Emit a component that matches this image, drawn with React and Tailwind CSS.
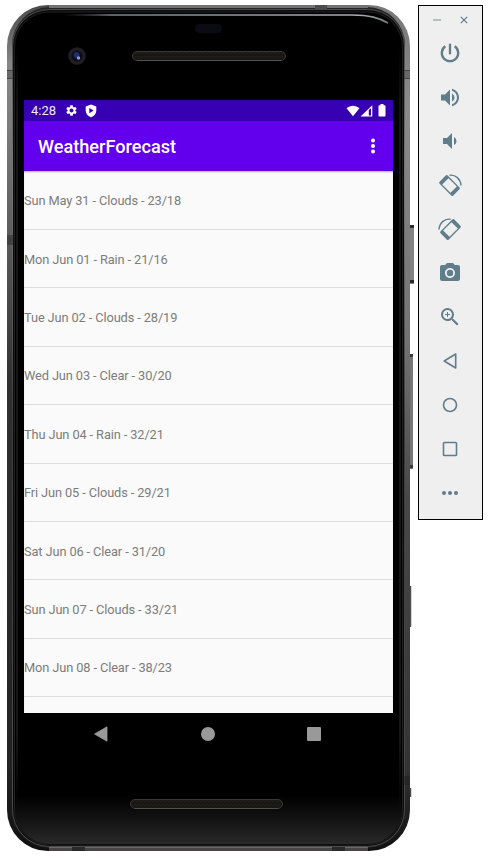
import React from "react";
import {
  MdVolumeUp,
  MdVolumeDown,
  MdCameraAlt,
  MdZoomIn,
  MdSettings,
} from "react-icons/md";

const forecast = [
  "Sun May 31 - Clouds - 23/18",
  "Mon Jun 01 - Rain - 21/16",
  "Tue Jun 02 - Clouds - 28/19",
  "Wed Jun 03 - Clear - 30/20",
  "Thu Jun 04 - Rain - 32/21",
  "Fri Jun 05 - Clouds - 29/21",
  "Sat Jun 06 - Clear - 31/20",
  "Sun Jun 07 - Clouds - 33/21",
  "Mon Jun 08 - Clear - 38/23",
];

function RotateIcon({ flip }) {
  return (
    <svg width="24" height="24" viewBox="0 0 24 24" className={flip ? "-scale-x-100" : ""}>
      <g transform="rotate(45 11.500 12.500)">
        <path
          fillRule="evenodd"
          fill="currentColor"
          d="M3.300 6.700h16.400a1.500 1.500 0 0 1 1.500 1.500v8.600a1.500 1.500 0 0 1-1.500 1.500H3.300a1.500 1.500 0 0 1-1.500-1.500V8.200a1.500 1.500 0 0 1 1.500-1.500zM5.600 8v9h11.800V8z"
        />
      </g>
      <path d="M11.500 2.200C17.500 1.400 22.600 6 23 12.500" fill="none" stroke="currentColor" strokeWidth="1.400" />
    </svg>
  );
}

function Outline({ children }) {
  return (
    <svg width="24" height="24" viewBox="0 0 24 24" fill="none" stroke="currentColor" strokeWidth="1.600" strokeLinejoin="round">
      {children}
    </svg>
  );
}

const tools = [
  <svg width="24" height="24" viewBox="0 0 24 24" fill="none" stroke="currentColor" strokeWidth="2.300">
    <path d="M12 2.800v10.400M7.300 5.300a8.200 8.200 0 1 0 9.400 0" />
  </svg>,
  <MdVolumeUp size={25} />,
  <MdVolumeDown size={24} />,
  <RotateIcon />,
  <RotateIcon flip />,
  <MdCameraAlt size={24} />,
  <MdZoomIn size={24} />,
  <Outline><path d="M17.700 5v14L6.200 12z" /></Outline>,
  <Outline><circle cx="12" cy="12" r="6.500" /></Outline>,
  <Outline><rect x="5.500" y="5.500" width="13" height="13" rx="0.800" /></Outline>,
  <svg width="24" height="24" viewBox="0 0 24 24" fill="currentColor">
    <circle cx="6" cy="12" r="2" /><circle cx="12" cy="12" r="2" /><circle cx="18" cy="12" r="2" />
  </svg>,
];

function Toolbar() {
  return (
    <aside className="ml-2 flex h-[515px] w-[65px] flex-col items-center border border-black bg-[#efefef] pt-2 text-[#607d8b]">
      <div className="flex h-3 w-full items-center justify-center gap-[19px]">
        <svg width="8" height="8" viewBox="0 0 8 8" stroke="#9db0b9" strokeWidth="1.500"><path d="M0 4h8" /></svg>
        <svg width="8" height="8" viewBox="0 0 8 8" stroke="currentColor" strokeWidth="1.200"><path d="M.8.8l6.400 6.400M7.200.8L.8 7.200" /></svg>
      </div>
      <div className="flex flex-col gap-5 pt-[15px] pr-px">
        {tools.map((icon, i) => (
          <div key={i} className="flex h-6 w-6 items-center justify-center">{icon}</div>
        ))}
      </div>
    </aside>
  );
}

function Grille({ width }) {
  return (
    <svg width={width} height="10" className="block">
      <defs>
        <pattern id="mesh" width="4" height="4" patternUnits="userSpaceOnUse">
          <rect width="4" height="4" fill="#15130f" />
          <path d="M1 0v3M3 1v3" stroke="#25231e" strokeWidth="1" />
        </pattern>
      </defs>
      <rect x=".5" y=".5" width={width - 1} height="9" rx="4.500" fill="url(#mesh)" stroke="#3a3835" />
      <path d={`M5 9.500H${width - 5}`} stroke="#54514c" />
    </svg>
  );
}

function StatusBar() {
  return (
    <div className="flex h-[21px] items-center bg-[#3700b3] pl-[7px] text-white">
      <span className="w-[34px] pt-px text-[13px] leading-5 text-[#f1ecfb]">4:28</span>
      <MdSettings size={13} />
      <svg width="12" height="14" viewBox="0 0 12 14" className="ml-[7px]">
        <path fillRule="evenodd" fill="currentColor" d="M6 .6l5.300 2v4.200c0 3-2.200 5.300-5.300 6.500C2.900 12.100.7 9.800.7 6.800V2.600zM4.300 4v5.200L8.700 6.600z" />
      </svg>
      <svg width="14" height="12" viewBox="0 0 14 12" className="ml-auto">
        <path fill="currentColor" d="M.5 3.200C4.300-.2 9.700-.2 13.500 3.200L7 11.300z" />
      </svg>
      <svg width="13" height="12" viewBox="0 0 13 12">
        <path fillRule="evenodd" fill="currentColor" d="M.5 11.500L12.300.2v11.300zM8.800 5v5.500h2.200V3.200z" />
      </svg>
      <svg width="8" height="13" viewBox="0 0 8 13" className="mr-[7px] ml-[5px]">
        <path fill="currentColor" d="M2.500 0h3v1.300h1.300c.4 0 .7.300.7.700v9.800c0 .4-.3.700-.7.700H1.200c-.4 0-.7-.3-.7-.7V2c0-.4.300-.7.700-.7h1.300z" />
      </svg>
    </div>
  );
}

function AppBar() {
  return (
    <header className="flex h-[50px] items-center justify-between bg-[#6200ee] pr-[17px] pl-[14px] text-white">
      <h1 className="pt-[2px] text-[18.150px] leading-none font-medium">WeatherForecast</h1>
      <svg width="6" height="16" viewBox="0 0 6 16" fill="currentColor">
        <circle cx="3" cy="2.500" r="2" /><circle cx="3" cy="8" r="2" /><circle cx="3" cy="13.500" r="2" />
      </svg>
    </header>
  );
}

function NavBar() {
  return (
    <nav className="flex h-[42px] items-center justify-between pr-[72px] pl-[70px] text-[#999]">
      <svg width="14" height="16" viewBox="0 0 14 16"><path fill="currentColor" d="M13 .8v14.400L.5 8z" stroke="currentColor" strokeLinejoin="round" strokeWidth=".8" /></svg>
      <div className="h-[14px] w-[14px] rounded-full bg-[#999]" />
      <div className="h-[14px] w-[14px] rounded-[1px] bg-[#999]" />
    </nav>
  );
}

/* Metal body, side keys and glass highlights of the handset. */
function DeviceBody() {
  return (
    <svg width="408" height="847" viewBox="0 0 408 847" className="absolute inset-0">
      <defs>
        <linearGradient id="leftRim" x1="0" x2="0" y1="0" y2="1">
          <stop offset="0" stopColor="#4c4c4c" />
          <stop offset=".07" stopColor="#868686" />
          <stop offset=".14" stopColor="#7c7c7c" />
          <stop offset=".27" stopColor="#5c5c5c" />
          <stop offset=".45" stopColor="#303030" />
          <stop offset=".9" stopColor="#232323" />
          <stop offset="1" stopColor="#101010" />
        </linearGradient>
        <linearGradient id="rightRim" x1="0" x2="0" y1="0" y2="1">
          <stop offset="0" stopColor="#777" />
          <stop offset=".12" stopColor="#8a8a8a" />
          <stop offset=".4" stopColor="#727272" />
          <stop offset=".58" stopColor="#484848" />
          <stop offset=".9" stopColor="#343434" />
          <stop offset="1" stopColor="#101010" />
        </linearGradient>
        <linearGradient id="innerLine" x1="0" x2="0" y1="0" y2="1">
          <stop offset="0" stopColor="#4a4a4a" />
          <stop offset=".2" stopColor="#777" />
          <stop offset=".5" stopColor="#3c3c3c" />
          <stop offset="1" stopColor="#4a4a4a" />
        </linearGradient>
        <linearGradient id="stripe" x1="0" x2="0" y1="0" y2="1">
          <stop offset="0" stopColor="#161616" stopOpacity="0" />
          <stop offset=".1" stopColor="#161616" />
          <stop offset=".9" stopColor="#161616" />
          <stop offset="1" stopColor="#161616" stopOpacity="0" />
        </linearGradient>
        <linearGradient id="chin" gradientUnits="userSpaceOnUse" x1="0" x2="0" y1="790" y2="840">
          <stop offset="0" stopColor="#242424" stopOpacity="0" />
          <stop offset="1" stopColor="#2a2a2a" />
        </linearGradient>
        <linearGradient id="shine" gradientUnits="userSpaceOnUse" x1="55" x2="383" y1="0" y2="0">
          <stop offset="0" stopColor="#444" stopOpacity="0" />
          <stop offset=".15" stopColor="#77848a" />
          <stop offset=".9" stopColor="#a7b1b3" />
          <stop offset="1" stopColor="#777" />
        </linearGradient>
        <clipPath id="shell"><rect width="403" height="846" rx="41" /></clipPath>
      </defs>

      <rect x="402" y="220" width="5" height="59" fill="#838383" />
      <path d="M402 221.500h5M402 276.500h5" stroke="#2b2b2b" strokeWidth="3" />
      <rect x="402" y="349" width="4" height="115" fill="#777" />
      <path d="M402 350.500h4M402 461.500h4" stroke="#3a3a3a" strokeWidth="3" />
      <path d="M403.500 581v41M403.500 783v9" stroke="#505050" strokeWidth="1.500" />

      <g clipPath="url(#shell)">
        <rect width="202" height="846" fill="url(#leftRim)" />
        <rect x="202" width="201" height="846" fill="url(#rightRim)" />
        <rect x="5" y="2" width="393" height="841" rx="38" fill="#252525" />
        <rect x="5.500" y="4.500" width="392" height="837" rx="37" fill="#0c0c0c" stroke="url(#innerLine)" />
        <rect x="7.500" y="7" width="388" height="833" rx="35" fill="#000" stroke="#202020" />
        <rect x="9" y="40" width="2" height="765" fill="url(#stripe)" />
        <rect x="392" y="40" width="2" height="765" fill="url(#stripe)" />
        <rect x="8" y="740" width="387" height="99" rx="34" fill="url(#chin)" />
        <path d="M42 1.500H361" stroke="#737373" strokeWidth="3" />
        <path d="M42 842.500H361" stroke="#6a6a6a" />
        <path d="M42 844.500H361" stroke="#464444" strokeWidth="3" />
        <path d="M0 65h6v9H0zM397 65h6v9h-6z" fill="#444" fillOpacity=".45" />
        <path d="M0 230h6v10H0zM397 771h6v9h-6z" fill="#1c1c1c" fillOpacity=".4" />
        <path d="M0 65.500h6M0 73.500h6M397 65.500h6M397 73.500h6M0 230.500h6M0 239.500h6" stroke="#444" />
        <path d="M308 0h12v4h-12z" fill="#4c4c4c" />
        <path d="M65 842h13v4H65zM325 842h13v4h-13z" fill="#2a2a2a" />
      </g>
      <path d="M55 10H345c18 0 27 3 36 8" fill="none" stroke="url(#shine)" strokeWidth="1.600" />
    </svg>
  );
}

function Earpiece() {
  return (
    <div className="flex h-[95px] flex-col">
      <div className="flex justify-center pt-[19px]">
        <div className="h-[9px] w-[27px] rounded-full bg-[#0b0c13]" />
      </div>
      <div className="flex items-center gap-[46px] pt-[14px] pl-[44px]">
        <svg width="18" height="18">
          <circle cx="9" cy="9" r="8.700" fill="#202020" />
          <circle cx="9" cy="9" r="5.500" fill="#0b0d1c" />
          <circle cx="8.500" cy="8" r="3" fill="#222e66" />
          <circle cx="10.500" cy="11" r="1.700" fill="#8798e8" />
        </svg>
        <Grille width={154} />
      </div>
    </div>
  );
}

function Phone() {
  return (
    <div className="relative ml-[7px] h-[846px] w-[403px] shrink-0">
      <DeviceBody />
      <div className="relative flex h-full flex-col pr-[17px] pl-[17px]">
        <Earpiece />
        <main className="flex w-[369px] flex-col">
          <StatusBar />
          <AppBar />
          <ul className="h-[542px] overflow-hidden bg-[#fafafa] pt-[0.600px] shadow-[inset_0_2px_2px_-1px_#aaa]">
            {forecast.map((day) => (
              <li key={day} className="flex h-[58.400px] items-center border-b border-[#dcdcdc] pt-px text-[12.800px] tracking-[-0.110px] text-[#7c7c7c]">{day}</li>
            ))}
          </ul>
          <NavBar />
        </main>
        <div className="flex pt-[44px] pl-[106px]">
          <Grille width={153} />
        </div>
      </div>
    </div>
  );
}

export default function App() {
  return (
    <div className="flex h-[865px] w-[502px] items-start overflow-hidden bg-white pt-[5px] font-[Roboto,sans-serif]">
      <Phone />
      <Toolbar />
    </div>
  );
}
